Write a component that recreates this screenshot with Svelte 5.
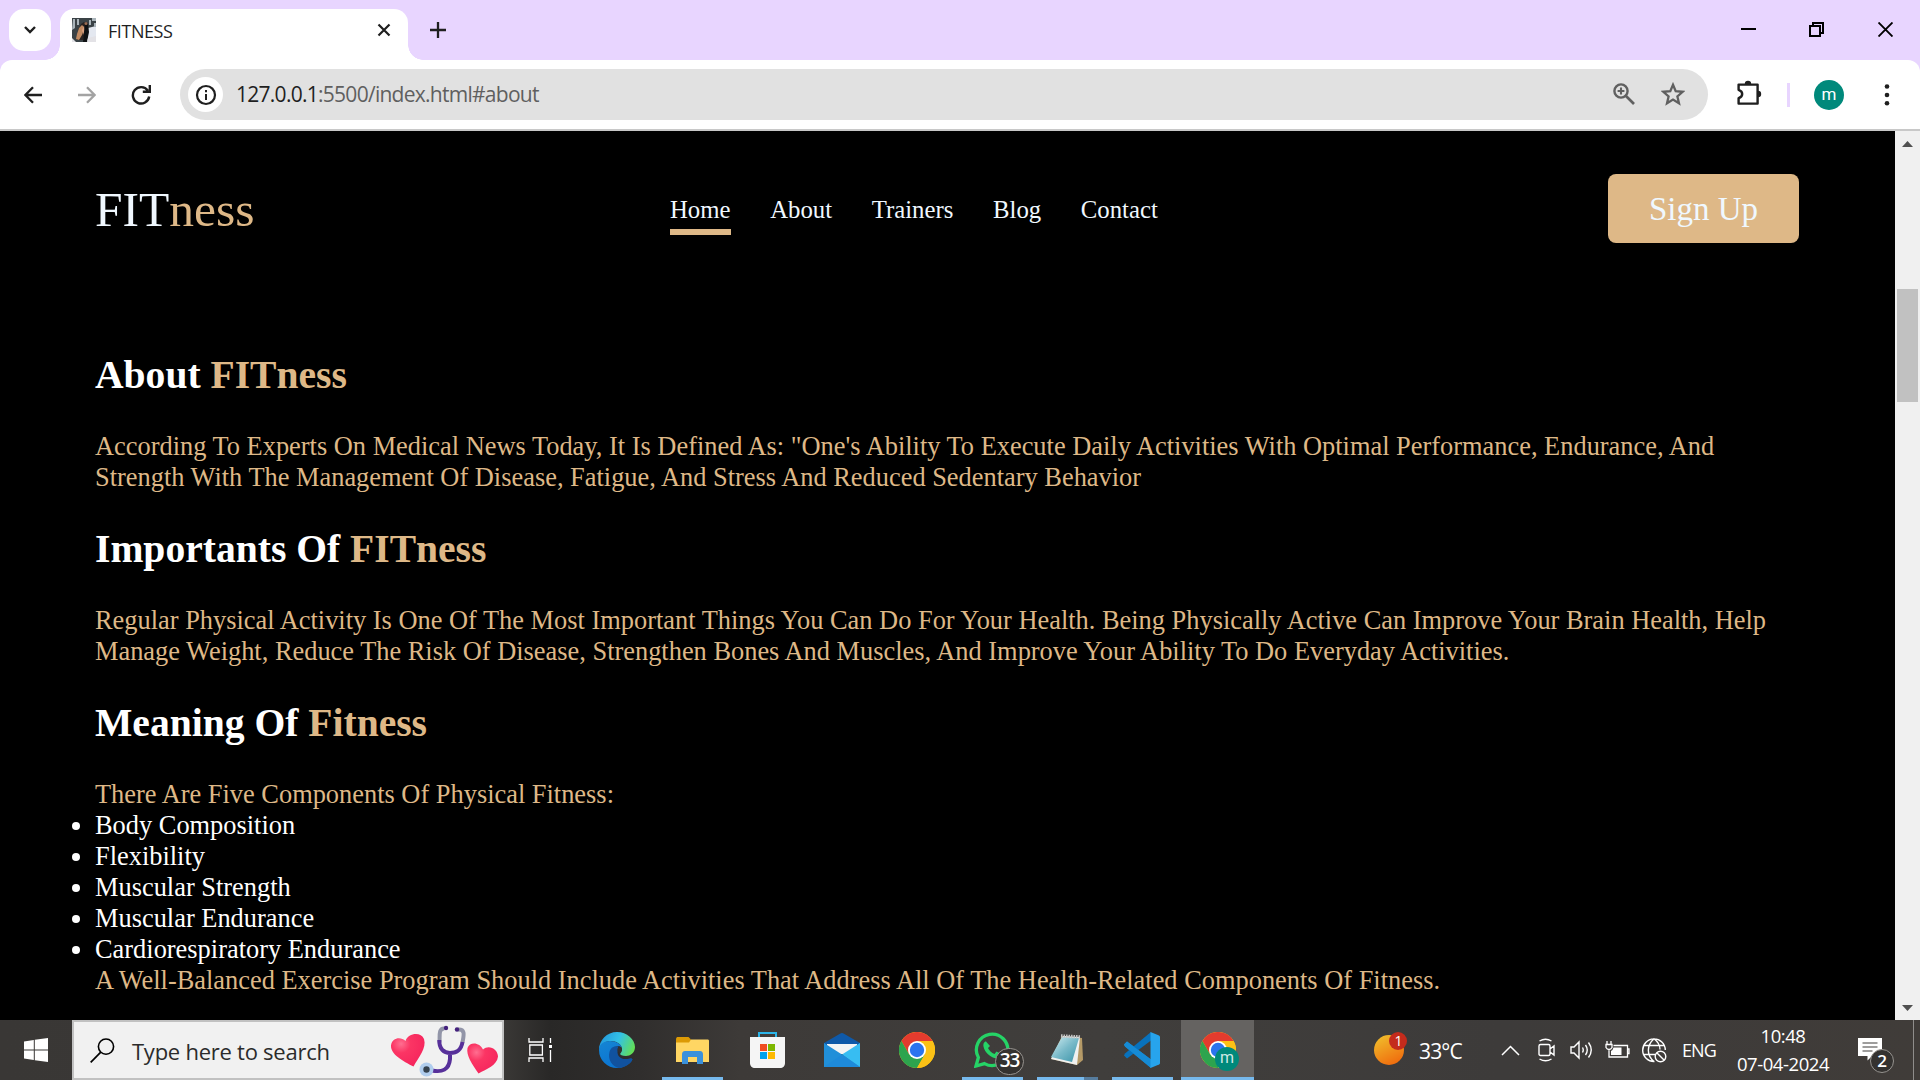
<script>
  const nav = ['Home', 'About', 'Trainers', 'Blog', 'Contact'];
  const components = [
    'Body Composition',
    'Flexibility',
    'Muscular Strength',
    'Muscular Endurance',
    'Cardiorespiratory Endurance'
  ];
</script>

{#snippet chromeLogo()}
  <svg width="36" height="36" viewBox="0 0 36 36">
    <circle cx="18" cy="18" r="18" fill="#fbc116" />
    <path d="M2.4 9A18 18 0 0 1 33.6 9H18L10.2 22.5Z" fill="#e33b2e" />
    <path d="M2.4 9A18 18 0 0 0 18 36L25.8 22.5H10.2Z" fill="#2da44e" />
    <path d="M33.6 9H18L25.8 22.5 18 36A18 18 0 0 0 33.6 9Z" fill="#fbc116" />
    <circle cx="18" cy="18" r="9" fill="#fff" />
    <circle cx="18" cy="18" r="7.2" fill="#2b74ee" />
  </svg>
{/snippet}

<div class="screen">
  <header class="tabstrip">
    <button class="drop" aria-label="Search tabs">
      <svg width="14" height="10" viewBox="0 0 14 10"><path d="M2 2l5 5 5-5" fill="none" stroke="#1f1f1f" stroke-width="2.4" /></svg>
    </button>
    <div class="tab">
      <svg class="favicon" width="24" height="24" viewBox="0 0 24 24">
        <rect width="24" height="24" fill="#3a4246" />
        <path d="M16 10l8-2v12l-9 3z" fill="#e4e8f0" />
        <path d="M1 1h2v9L0 12zM5 1h2v6H5zM17 2h2v5h-2zM20 0h4v3h-4zM22 5h2v4h-2z" fill="#aab4ba" />
        <path d="M6 12l3-6 3-2 2 3-1 8-2 7H5z" fill="#2a2321" />
        <path d="M5 16l2-6 3-3 2 2-2 8-3 5-3-1z" fill="#c08a62" />
        <path d="M10 12l2-4 1 4-2 5z" fill="#dba07e" />
        <path d="M13 4l3 1 1 9-2 10h-4l1-10z" fill="#0f1113" />
        <path d="M0 20l4 4H0zM16 20l8-2v6h-9z" fill="#e3e2e6" />
        <circle cx="14" cy="5.500" r="1.500" fill="#9c6d53" />
      </svg>
      <span class="title">FITNESS</span>
      <svg class="tabclose" width="14" height="14" viewBox="0 0 14 14"><path d="M1.5 1.5l11 11m0-11l-11 11" stroke="#1f1f1f" stroke-width="2.2" /></svg>
    </div>
    <svg class="plus" width="16" height="16" viewBox="0 0 16 16"><path d="M8 0v16M0 8h16" stroke="#1f1f1f" stroke-width="2.3" /></svg>
    <div class="winbtns">
      <svg width="15" height="15" viewBox="0 0 15 15"><path d="M0 7h15" stroke="#000" stroke-width="2" /></svg>
      <svg width="15" height="15" viewBox="0 0 15 15"><path d="M1 4h10v10H1zM4 4V1h10v10h-3" fill="none" stroke="#000" stroke-width="2" /></svg>
      <svg width="15" height="15" viewBox="0 0 15 15"><path d="M.5.5l14 14m0-14l-14 14" stroke="#000" stroke-width="1.9" /></svg>
    </div>
  </header>

  <div class="toolbar-back">
    <div class="toolbar">
      <svg width="18" height="18" viewBox="0 0 18 18"><path d="M18 9H1.8M9 1.2L1.4 9 9 16.8" fill="none" stroke="#1f1f1f" stroke-width="2.3" /></svg>
      <svg width="18" height="18" viewBox="0 0 18 18"><path d="M0 9h16.2M9 1.2L16.6 9 9 16.8" fill="none" stroke="#a3a3a3" stroke-width="2.3" /></svg>
      <svg width="20" height="20" viewBox="0 0 20 20"><path d="M16.8 5.600A8.2 8.2 0 1 0 18.2 11.5M11.8 6.8h7V0" fill="none" stroke="#1f1f1f" stroke-width="2.4" /></svg>
      <div class="omnibox">
        <div class="info">
          <svg width="22" height="22" viewBox="0 0 22 22"><circle cx="11" cy="11" r="9" fill="none" stroke="#1f1f1f" stroke-width="2.2" /><path d="M11 10v6M11 6v2.2" stroke="#1f1f1f" stroke-width="2" /></svg>
        </div>
        <span class="url">127.0.0.1<i>:5500/index.html#about</i></span>
        <svg class="mag" width="22" height="22" viewBox="0 0 22 22"><circle cx="8" cy="8" r="6.6" fill="none" stroke="#606060" stroke-width="2.4" /><path d="M13 13l8 8" stroke="#606060" stroke-width="2.600" /><path d="M8 4.6v6.8M4.6 8h6.8" stroke="#606060" stroke-width="2.1" /></svg>
        <svg class="star" width="24" height="24" viewBox="0 0 24 24"><path d="M12 2.8l2.7 6.4 7 .6-5.3 4.6 1.6 6.9-6-3.7-6 3.7 1.6-6.9L2.3 9.8l7-.6z" fill="none" stroke="#606060" stroke-width="2.300" /></svg>
      </div>
      <svg class="puzzle" width="26" height="26" viewBox="0 0 26 26">
        <path d="M2.6 4.6H21.6V23.6H2.6V18.2C7.4 16.500 7.4 11.500 2.6 9.8Z" fill="none" stroke="#1f1f1f" stroke-width="2.4" stroke-linejoin="round" />
        <path d="M8.8 4a3.2 3.2 0 0 1 6.4 0zM22 10.8a3.2 3.2 0 0 1 0 6.4z" fill="#1f1f1f" />
      </svg>
      <span class="divider"></span>
      <span class="avatar">m</span>
      <svg class="dots" width="6" height="22" viewBox="0 0 6 22"><g fill="#1f1f1f"><circle cx="3" cy="2.5" r="2.3" /><circle cx="3" cy="11" r="2.3" /><circle cx="3" cy="19.3" r="2.3" /></g></svg>
    </div>
  </div>

  <div class="viewport">
    <div class="page">
      <nav>
        <div class="logo">FIT<span>ness</span></div>
        <ul class="links">
          {#each nav as item, i}
            <li class:active={i === 0}>{item}</li>
          {/each}
        </ul>
        <button class="signup">Sign Up</button>
      </nav>
      <main>
        <h2>About <span>FITness</span></h2>
        <p>According To Experts On Medical News Today, It Is Defined As: "One's Ability To Execute Daily Activities With Optimal Performance, Endurance, And<br />Strength With The Management Of Disease, Fatigue, And Stress And Reduced Sedentary Behavior</p>
        <h2>Importants Of <span>FITness</span></h2>
        <p>Regular Physical Activity Is One Of The Most Important Things You Can Do For Your Health. Being Physically Active Can Improve Your Brain Health, Help<br />Manage Weight, Reduce The Risk Of Disease, Strengthen Bones And Muscles, And Improve Your Ability To Do Everyday Activities.</p>
        <h2>Meaning Of <span>Fitness</span></h2>
        <p>There Are Five Components Of Physical Fitness:</p>
        <ul class="components">
          {#each components as c}
            <li>{c}</li>
          {/each}
        </ul>
        <p>A Well-Balanced Exercise Program Should Include Activities That Address All Of The Health-Related Components Of Fitness.</p>
      </main>
    </div>
    <div class="scrollbar">
      <svg width="11" height="6" viewBox="0 0 11 6"><path d="M0 6L5.5 0 11 6z" fill="#505050" /></svg>
      <div class="thumb"></div>
      <svg width="11" height="6" viewBox="0 0 11 6"><path d="M0 0h11L5.5 6z" fill="#505050" /></svg>
    </div>
  </div>

  <footer class="taskbar">
    <div class="start">
      <svg width="24" height="24" viewBox="0 0 24 24"><path d="M0 3.4l9.8-1.4v9.4H0zM10.8 1.8L24 0v11.4H10.8zM0 12.4h9.8V22L0 20.6zM10.8 12.4H24V24l-13.2-1.8z" fill="#fff" /></svg>
    </div>
    <div class="search">
      <svg class="lens" width="25" height="25" viewBox="0 0 25 25"><circle cx="16" cy="8.6" r="7.6" fill="none" stroke="#000" stroke-width="1.6" /><path d="M10.8 14.2L.7 24.3" stroke="#000" stroke-width="1.7" /></svg>
      <span class="hint">Type here to search</span>
      <svg class="art" width="110" height="54" viewBox="0 0 110 54">
        <defs>
          <radialGradient id="heart" cx=".3" cy=".3" r=".8"><stop offset="0" stop-color="#ff6e90" /><stop offset=".35" stop-color="#fb3564" /><stop offset="1" stop-color="#f5245c" /></radialGradient>
        </defs>
        <path d="M23.500 43.500C13 38 .5 31.500 1 22.500 2 14.500 11 13.500 15.500 18 18 10 31 8.500 34 16 37 25 28 35 23.500 43.500Z" fill="url(#heart)" />
        <path d="M88.500 50.500C82 41 76 32.500 77.500 25 80 18 90 19.500 93 26.500 99 21 108 26.500 108 33.500 107 42.500 96.500 46 88.500 50.500Z" fill="url(#heart)" />
        <path d="M54.500 5.500C48 5 50 14 49.500 19.500M68 6.500C76 6 73.500 13 72.500 19.500" fill="none" stroke="#9295a8" stroke-width="4" />
        <path d="M49.300 17C49 26 54 30 60 30S71 28 72.500 19M60 30V36C59 47 52 49.500 42 47.500" fill="none" stroke="#57309a" stroke-width="4" />
        <circle cx="56" cy="5" r="2.200" fill="#43207c" /><circle cx="67" cy="6.500" r="2.200" fill="#43207c" />
        <circle cx="36.500" cy="46.500" r="7" fill="#b0cdee" /><circle cx="36.500" cy="46.500" r="3.200" fill="#35424f" />
      </svg>
    </div>
    <div class="taskview">
      <svg width="25" height="24" viewBox="0 0 25 24"><path d="M1 0v4h14V0M1.800 7h12.600v10H1.800zM1 24v-4h14v4M22.500 0v5M22.500 12v12" fill="none" stroke="#fff" stroke-width="1.300" /><path d="M21 7h3v3h-3z" fill="#fff" /></svg>
    </div>
    <div class="apps">
      <div class="app">
        <svg width="36" height="36" viewBox="0 0 36 36">
          <defs>
            <linearGradient id="edgeTop" x1="0" y1=".3" x2="1" y2=".6"><stop offset="0" stop-color="#2297dc" /><stop offset=".5" stop-color="#33c1e6" /><stop offset="1" stop-color="#63df55" /></linearGradient>
            <linearGradient id="edgeLow" x1="0" y1="0" x2=".5" y2="1"><stop offset="0" stop-color="#1585d3" /><stop offset="1" stop-color="#0b74d2" /></linearGradient>
          </defs>
          <path d="M0 18C0 8 8 0 18 0S36 7.500 36 15C36 21 31 24 27 24S21 23 21 21.500 23 20 23 17C23 12 17 9 12 9 5 9 1 14 0 18Z" fill="url(#edgeTop)" />
          <path d="M0 18C0 12 5 9 11 9 17 9 22 12 22.800 15.500 19.500 12.500 13.500 14.500 13.500 21 13.500 28.500 22 32 33.500 27.500 30 33 24 36 18 36A18 18 0 0 1 0 18Z" fill="url(#edgeLow)" />
          <path d="M10.500 20C8.500 27 13 35 20 36 26 35.500 31.500 32 33.500 27.500 33 26 32 26 30.500 26.500 23 28.500 18 25 18.500 19 18.600 17 19 15.500 19.500 14.500 14.500 13.500 11.500 16 10.500 20Z" fill="#11529f" />
          <path d="M19.500 14.500C18 17 18.500 20 21 22 22 20.500 23 19.500 23 17 22.500 15.500 21 14.500 19.500 14.500Z" fill="#34312f" />
        </svg>
      </div>
      <div class="app open">
        <svg width="33" height="27" viewBox="0 0 33 27">
          <path d="M0 2.500C0 .5 1 0 2 0H12.500l2.500 2.500V6H0z" fill="#dc9a05" />
          <path d="M0 5.500h13l2-3H31.500c1 0 1.500.5 1.500 1.500V25H0z" fill="#ffd663" />
          <path d="M6 27V17.500C6 15.500 7 14 9 14H24c2 0 3 1.500 3 3.500V27H21V20H12v7z" fill="#3a91dc" />
        </svg>
      </div>
      <div class="app">
        <svg width="35" height="36" viewBox="0 0 35 36">
          <path d="M9 7V1h17v6" fill="none" stroke="#2bb4e8" stroke-width="2" />
          <path d="M0 5h35V31c0 3-2 5-5 5H5c-3 0-5-2-5-5z" fill="#f5f5f5" />
          <path d="M10 12h7v7h-7z" fill="#f04e23" /><path d="M18 12h7v7h-7z" fill="#7db700" /><path d="M10 20h7v7h-7z" fill="#00a2ed" /><path d="M18 20h7v7h-7z" fill="#fdb900" />
        </svg>
      </div>
      <div class="app">
        <svg width="36" height="34" viewBox="0 0 36 34">
          <path d="M0 10L16 .7q2-1.200 4 0L36 10V18H0z" fill="#0f59a8" />
          <path d="M3 11h30v10H3z" fill="#f4f4f4" />
          <path d="M0 10L36 33V34H0z" fill="#218fd9" /><path d="M36 10V34L18 21.600z" fill="#37bdf2" /><path d="M36 34L18 21.600 0 34z" fill="#1e8ada" />
        </svg>
      </div>
      <div class="app">{@render chromeLogo()}</div>
      <div class="app open">
        <svg width="36" height="36" viewBox="0 0 36 36">
          <path d="M2 34L4.400 25.500A15.700 15.700 0 1 1 10.500 31.600Z" fill="none" stroke="#25d366" stroke-width="3.300" />
          <path d="M12 9.500c-2 0-3 2.500-2.500 5 1 6 8 12 14 12 2 0 4-2 4-4.500l-5-2.500-2 2.500c-3-1-5.500-3.500-6.500-6l2-2z" fill="#25d366" />
        </svg>
        <span class="count">33</span>
      </div>
      <div class="app stacked">
        <svg width="36" height="36" viewBox="0 0 36 36">
          <defs><linearGradient id="note" x1="0" y1="0" x2="1" y2="1"><stop offset="0" stop-color="#d3eef2" /><stop offset=".5" stop-color="#79bac9" /><stop offset="1" stop-color="#3a93a8" /></linearGradient></defs>
          <path d="M13 4L33 6 34 28 28 33 2 27z" fill="#b59a67" /><path d="M14 4L31 5 28 33 2 27z" fill="#f0f1f0" />
          <path d="M13 5l17 1-7 24L2 25z" fill="url(#note)" /><path d="M12 4l19 1" stroke="#c4c4c4" stroke-width="3.500" stroke-dasharray="1.500 1" />
        </svg>
      </div>
      <div class="app open">
        <svg width="36" height="36" viewBox="0 0 36 36">
          <path d="M0 12.500L3 9.500 27 27.500V36L1 14.500z" fill="#168bd5" /><path d="M0 23.500L3 26.500 27 8.500V0L1 21.500z" fill="#0872bd" />
          <path d="M0 12.500L3 9.500 27 27.500V36L1 14.500z" fill="#168bd5" />
          <path d="M26.500 0L35 3.500Q36 4 36 5V31q0 1-1 1.500L26.500 36z" fill="#27a4ed" />
        </svg>
      </div>
      <div class="app current">
        {@render chromeLogo()}
        <span class="badge-m">m</span>
      </div>
    </div>

    <div class="tray">
      <div class="weather">
        <svg width="34" height="34" viewBox="0 0 34 34">
          <defs><linearGradient id="sun" x1=".2" y1="0" x2=".7" y2="1"><stop offset="0" stop-color="#f0bd2b" /><stop offset="1" stop-color="#f06a0d" /></linearGradient></defs>
          <circle cx="15" cy="18" r="15" fill="url(#sun)" /><circle cx="24" cy="9" r="9" fill="#c42b1c" />
          <text x="24" y="14" text-anchor="middle" font-size="14" fill="#fff">1</text>
        </svg>
        <span>33°C</span>
      </div>
      <svg class="i-up" width="19" height="11" viewBox="0 0 19 11"><path d="M1 10l8.500-8.500L18 10" fill="none" stroke="#fff" stroke-width="1.500" /></svg>
      <svg class="i-meet" width="18" height="24" viewBox="0 0 18 24"><path d="M2.500 6.500h8q1.500 0 1.500 1.500v8q0 1.500-1.500 1.500h-8Q1 17.500 1 16V8q0-1.500 1.500-1.500zM12 11l4-3v9l-4-3M1.500 3q6-3.500 12 0M1.500 21q6 3.500 12 0" fill="none" stroke="#fff" stroke-width="1.400" /></svg>
      <svg class="i-vol" width="24" height="20" viewBox="0 0 24 20"><path d="M1 7h3l5-5v16l-5-5H1zM12.500 7.500q1.500 2.500 0 5M15.500 5q3.500 5 0 10M18.500 2.500q5.500 7.500 0 15" fill="none" stroke="#fff" stroke-width="1.400" /></svg>
      <svg class="i-bat" width="25" height="18" viewBox="0 0 25 18"><path d="M8.500 4.500h14v11.500H4V8.500M22.500 8H24v4.500h-1.500M2 0v3M6 0v3M1 3.500h6v3q-1 2-3 2t-3-2z" fill="none" stroke="#fff" stroke-width="1.300" /><path d="M8.500 6.500H16.500V14H6V10q2-1 2.500-3.500z" fill="#fff" /></svg>
      <svg class="i-net" width="25" height="25" viewBox="0 0 25 25"><g fill="none" stroke="#fff" stroke-width="1.400"><path d="M12.500 23.500A11.300 11.300 0 1 1 23.300 12M12 23.500C4 17 5 7 12 .8 17 4.500 18 8 18 11.500M2 7.500h20.500M2 16.500h11" /><circle cx="18.500" cy="18.500" r="5.300" /><path d="M15 15l7 7" /></g></svg>
      <span class="lang">ENG</span>
      <div class="clock"><span class="time">10:48</span><span class="date">07-04-2024</span></div>
      <div class="notice">
        <svg width="24" height="24" viewBox="0 0 24 24"><path d="M0 0h24v18H14l-4.500 4.500V18H0z" fill="#fff" /><path d="M4.500 5h15M4.500 9h15M4.500 13h10" stroke="#3f3d3b" stroke-width="1.200" /></svg>
        <span class="count two">2</span>
      </div>
      <span class="peek"></span>
    </div>
  </footer>
</div>

<style>
  :global(body) { background: #000; }
  * { box-sizing: border-box; }
  svg { display: block; flex: none; }
  button { border: 0; padding: 0; }
  .screen { width: 1920px; height: 1080px; overflow: hidden; display: flex; flex-direction: column; font-family: "Open Sans", "Noto Sans", sans-serif; white-space: nowrap; }

  .tabstrip { height: 60px; flex: none; background: #e8d5ff; display: flex; align-items: flex-start; padding: 9px 27px 0 9px; }
  .drop { width: 42px; height: 42px; border-radius: 15px; background: #fff; display: grid; place-items: center; }
  .tab { position: relative; margin-left: 9px; width: 348px; height: 51px; border-radius: 14px 14px 0 0; background: #fff; display: flex; align-items: center; padding: 0 17px 9px 12px; }
  .tab::before, .tab::after { content: ""; position: absolute; bottom: 0; width: 15px; height: 15px; }
  .tab::before { left: -15px; background: radial-gradient(circle at 0 0, transparent 14.500px, #fff 15px); }
  .tab::after { right: -15px; background: radial-gradient(circle at 100% 0, transparent 14.500px, #fff 15px); }
  .title { margin-left: 12px; font-size: 18px; letter-spacing: -0.450px; color: #1f1f1f; line-height: 24px; padding-top: 1px; }
  .tabclose { margin-left: auto; }
  .plus { margin: 13px 0 0 22px; }
  .winbtns { margin: 13px 0 0 auto; display: flex; gap: 54px; }
  .winbtns svg:first-child { margin-right: -1px; margin-left: 1px; }

  .toolbar-back { flex: none; background: #e8d5ff; }
  .toolbar { height: 71px; background: #fff; border-radius: 12px 12px 0 0; border-bottom: 2px solid #c8c8c8; display: flex; align-items: center; padding: 0 30px 0 24px; }
  .toolbar > svg:nth-child(2) { margin-left: 36px; }
  .toolbar > svg:nth-child(3) { margin-left: 35px; }
  .omnibox { margin-left: 29px; width: 1528px; height: 51px; border-radius: 26px; background: #e1e1e1; display: flex; align-items: center; padding: 0 23px 0 8px; }
  .info { width: 35px; height: 35px; border-radius: 50%; background: #fff; display: grid; place-items: center; }
  .url { margin: -2px 0 0 13px; font-size: 21px; letter-spacing: -0.730px; color: #1f1f1f; }
  .url i { font-style: normal; color: #5f5f5f; }
  .mag { margin-left: auto; margin-top: -1px; }
  .star { margin-left: 26px; margin-top: -1px; }
  .puzzle { margin: -3px 0 0 28px; }
  .divider { margin-left: 25px; width: 3px; height: 24px; background: #e8d5ff; }
  .avatar { margin-left: 24px; width: 30px; height: 30px; border-radius: 50%; background: #00897b; color: #fff; font: 17px/28px Roboto, sans-serif; text-align: center; }
  .dots { margin-left: auto; }

  .viewport { height: 889px; flex: none; display: flex; font-family: "Liberation Serif", "Times New Roman", serif; }
  .page { width: 1895px; background: #000; }
  nav { height: 155px; display: flex; align-items: center; padding: 0 96px 0 95px; }
  .logo { width: 575px; margin-top: 3px; font-size: 49.500px; line-height: 56px; color: #f0f8ff; }
  .logo span, h2 span { color: #deb887; }
  .links { list-style: none; display: flex; gap: 39.700px; margin: 14px 0 0; padding: 0; }
  .links li { font-size: 24.750px; line-height: 28px; padding-bottom: 5px; border-bottom: 6px solid transparent; color: #f0f8ff; }
  .links .active { border-color: #deb887; }
  .signup { margin-left: auto; width: 191px; height: 69px; border-radius: 8px; background: #deb887; color: #f0f8ff; font: 33px/38px "Liberation Serif", serif; }
  main { padding: 67px 0 0 95px; }
  h2 { margin: 0 0 33px; font-size: 39.600px; line-height: 45px; font-weight: 700; color: #fff; }
  p { margin: 0; font-size: 26.400px; line-height: 31px; color: #deb887; }
  p + h2 { margin-top: 34px; }
  .components { margin: 0; padding: 0; color: #fff; font-size: 26.400px; line-height: 31px; }
  .scrollbar { width: 25px; background: #f0f0f0; display: flex; flex-direction: column; align-items: center; padding: 10px 0 9px; }
  .thumb { width: 21px; height: 113px; margin: 142px 0 auto; background: #c1c1c1; }

  .taskbar { height: 60px; flex: none; display: flex; color: #fff; background: linear-gradient(90deg, #393735 0, #3b3937 500px, #292827 550px, #302e2d 640px, #3d3a38 740px, #403e3c 1100px, #3d3b3a 1500px, #403c39 1920px); }
  .start { width: 72px; display: grid; place-items: center; }
  .search { width: 432px; border: 2px solid #c1c1c1; background: #f1f1f1; display: flex; align-items: center; padding: 0 2px 0 16px; color: #2b2b2b; }
  .hint { margin: 1px 0 0 17px; font-size: 22px; letter-spacing: -0.250px; }
  .art { margin-left: auto; }
  .taskview { width: 75px; padding-right: 2px; display: grid; place-items: center; }
  .apps { display: flex; width: 675px; }
  .app { position: relative; width: 75px; display: grid; place-items: center; padding-left: 1px; }
  .open::after, .stacked::after, .current::after { content: ""; position: absolute; bottom: 0; left: 8px; width: 61px; height: 3px; background: #76b9ed; }
  .stacked::after { background: linear-gradient(90deg, #76b9ed 47px, #567c9d 47px); }
  .current { background: #656361; width: 73px; margin-left: 2px; padding: 0; }
  .current::after { left: 0; width: 73px; }
  .count { position: absolute; left: 41px; top: 28px; width: 29px; height: 27px; border-radius: 14px; border: 1.500px solid #96938f; background: #343230; font-size: 19px; line-height: 23px; text-align: center; letter-spacing: -1px; font-weight: 600; }
  .badge-m { position: absolute; left: 34px; top: 27px; width: 24px; height: 24px; border-radius: 50%; background: #00897b; color: #cfe8e5; font: 16px/22px Roboto, sans-serif; text-align: center; }

  .tray { flex: 1; display: flex; align-items: center; }
  .weather { margin-left: 120px; width: 127px; display: flex; align-items: center; font-size: 21px; letter-spacing: -0.850px; }
  .weather svg { margin: -3px 11px 0 0; }
  .weather span { padding-top: 1px; }
  .weather text { font-family: "Open Sans", sans-serif; }
  .i-meet { margin-left: 18px; }
  .i-vol { margin-left: 14px; }
  .i-bat { margin-left: 11px; }
  .i-net { margin-left: 12px; }
  .lang { margin-left: 15px; width: 35px; font-size: 18px; letter-spacing: -0.900px; }
  .clock { margin-left: 15px; width: 102px; display: flex; flex-direction: column; align-items: center; font-size: 18.500px; line-height: 28px; letter-spacing: -0.450px; }
  .notice { position: relative; margin-left: 24px; }
  .two { left: 12px; top: 11px; width: 24px; height: 24px; font-size: 17px; line-height: 21px; letter-spacing: 0; }
  .peek { margin-left: auto; margin-right: 6px; width: 1.500px; height: 60px; background: #8f8d8b; }
</style>
